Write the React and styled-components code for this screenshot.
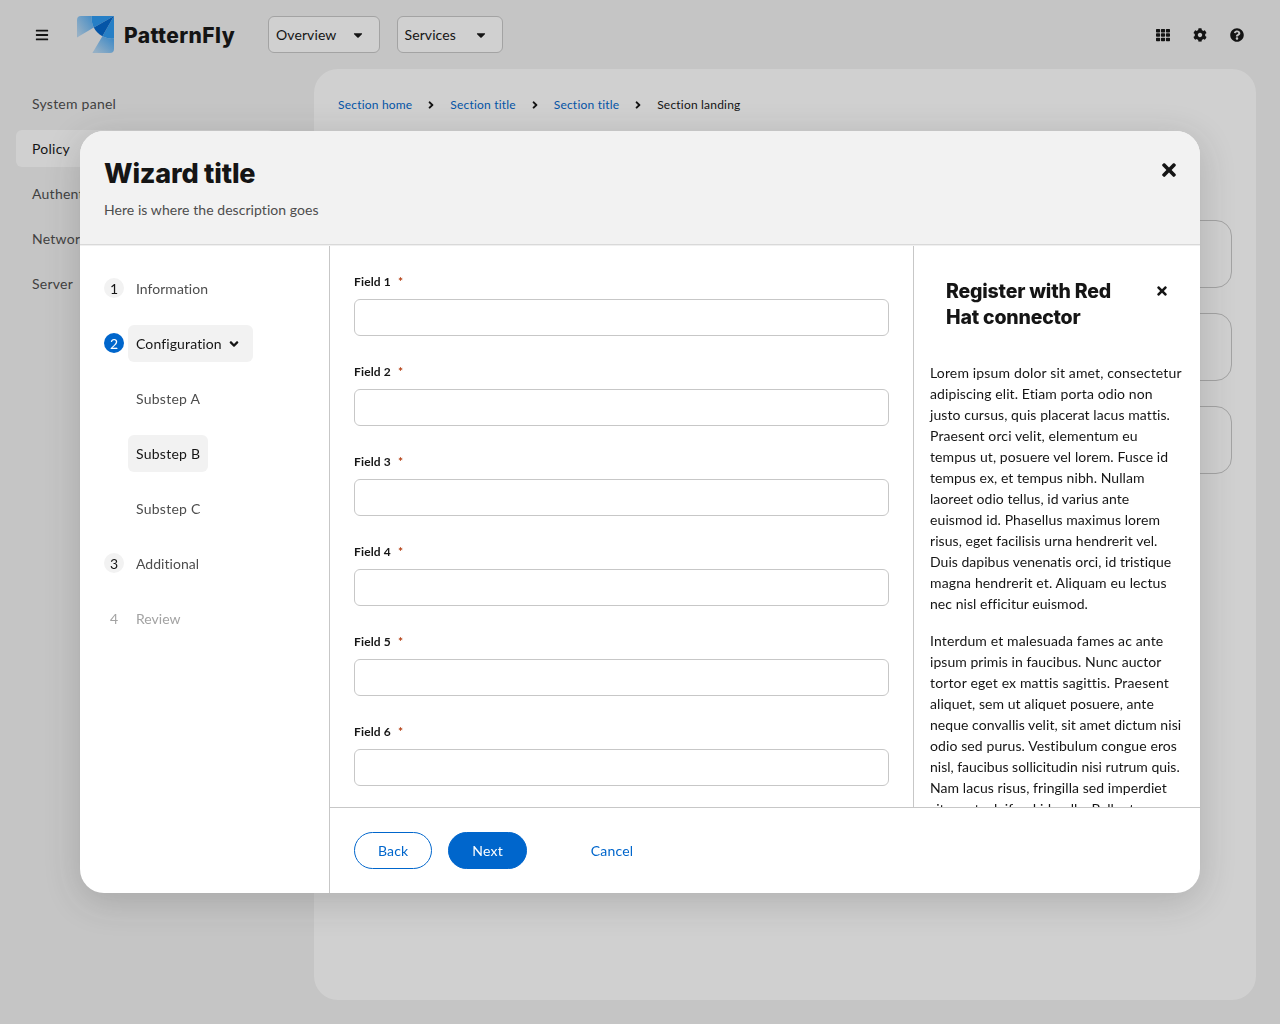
import React from "react";
import styled, { createGlobalStyle, css } from "styled-components";
import {
  FaBars,
  FaTh,
  FaCog,
  FaQuestionCircle,
  FaCaretDown,
  FaAngleRight,
  FaAngleDown,
  FaTimes,
} from "react-icons/fa";

const Global = createGlobalStyle`
  *, *::before, *::after { box-sizing: border-box; }
  body {
    margin: 0;
    background: #f2f2f2;
    color: #151515;
    font-family: Lato, "Open Sans", sans-serif;
    font-size: 14px;
    line-height: 21px;
    letter-spacing: 0.1px;
    overflow: hidden;
  }
  h1, h2, p, ul, ol { margin: 0; padding: 0; }
  ul, ol { list-style: none; }
  a { color: #0066cc; text-decoration: none; }
  button { font: inherit; letter-spacing: inherit; color: inherit; cursor: pointer; }
  svg { display: block; flex: none; }
`;

const displayFont = css`
  font-family: Inter, "Open Sans", sans-serif;
  font-weight: 800;
  white-space: nowrap;
`;

const Page = styled.div`
  display: grid;
  grid-template: 69px 1fr / 314px 1fr;
  height: 1024px;
`;

const Masthead = styled.header`
  grid-column: 1 / -1;
  display: flex;
  align-items: center;
  padding: 0 28px 0 23.5px;
`;

const IconButton = styled.button`
  display: flex;
  align-items: center;
  justify-content: center;
  width: 37px;
  height: 37px;
  padding: 0;
  border: 0;
  background: none;
  font-size: ${(p) => p.$size || 14}px;
`;

const Brand = styled.div`
  display: flex;
  align-items: center;
  gap: 10px;
  margin-left: 16.5px;
  width: 175px;
`;

const BrandName = styled.span`
  ${displayFont}
  padding-top: 1px;
  font-size: 21px;
  letter-spacing: 0.4px;
`;

const ToggleGroup = styled.div`
  display: flex;
  gap: 16.5px;
  margin-left: 16px;
`;

const Toggle = styled.button`
  display: flex;
  align-items: center;
  justify-content: space-between;
  width: ${(p) => p.$width}px;
  height: 37px;
  padding: 0 14.5px 0 7px;
  border: 1px solid #c7c7c7;
  border-radius: 6px;
  background: #fff;
`;

const Tools = styled.div`
  display: flex;
  margin-left: auto;
  margin-right: -3.4px;
`;

const Sidebar = styled.ul`
  display: flex;
  flex-direction: column;
  gap: 8px;
  padding: 16px 40px 0 16px;
`;

const SidebarItem = styled.li`
  height: 37px;
  padding: 8px 16px;
  border-radius: 6px;
  letter-spacing: 0.25px;
  color: ${(p) => (p.$current ? "#151515" : "#4d4d4d")};
  background: ${(p) => (p.$current ? "#fff" : "none")};
`;

const Main = styled.main`
  display: flex;
  flex-direction: column;
  margin: 0 24px 24px 0;
  padding: 26px 24px;
  border-radius: 24px;
  background: #fff;
`;

const Breadcrumb = styled.ol`
  display: flex;
  height: 20px;
  font-size: 12px;
  line-height: 20px;
  letter-spacing: 0.2px;
`;

const Crumb = styled.li`
  display: flex;
  align-items: center;
`;

const CrumbSeparator = styled.span`
  display: flex;
  margin: 0 12.9px 0 13px;
`;

const CardStack = styled.div`
  display: flex;
  flex-direction: column;
  gap: 25px;
  margin-top: 105px;
`;

const Card = styled.div`
  height: 68px;
  border: 1px solid #c7c7c7;
  border-radius: 16px;
`;

const Backdrop = styled.div`
  position: fixed;
  inset: 0;
  display: flex;
  align-items: center;
  justify-content: center;
  background: rgba(21, 21, 21, 0.2);
`;

const Modal = styled.section`
  display: flex;
  flex-direction: column;
  width: 1120px;
  height: 762px;
  border-radius: 24px;
  background: #fff;
  overflow: hidden;
  box-shadow: 0 8px 36px rgba(41, 41, 41, 0.2);
`;

const WizardHeader = styled.header`
  display: flex;
  justify-content: space-between;
  height: 115px;
  padding: 24px 12.5px 0 24px;
  border-bottom: 1px solid #f0f0f0;
  background: #f2f2f2;
  box-shadow: inset 0 -1px 0 #d9d9d9;
`;

const WizardTitle = styled.h1`
  ${displayFont}
  padding-top: 1px;
  font-size: 27px;
  line-height: 36px;
  letter-spacing: -0.2px;
`;

const WizardDescription = styled.p`
  margin-top: 7px;
  color: #4d4d4d;
  letter-spacing: 0.06px;
`;

const WizardCloseSlot = styled.div`
  margin-top: -4px;
`;

const WizardBody = styled.div`
  display: grid;
  grid-template: 1fr 86px / 250px 1fr;
  flex: 1;
  min-height: 0;
`;

const Steps = styled.ol`
  grid-row: 1 / -1;
  display: flex;
  flex-direction: column;
  gap: 18px;
  padding: 24.45px 24px 0;
  border-right: 1px solid #c7c7c7;
`;

const Step = styled.li`
  display: flex;
  align-items: flex-start;
  gap: 4px;
  height: 37px;
  padding-left: ${(p) => (p.$nested ? 24 : 0)}px;
  letter-spacing: ${(p) => (p.$nested ? 0.25 : p.$current ? 0.12 : 0.03)}px;
`;

const StepNumber = styled.span`
  width: 20px;
  height: 20px;
  margin-top: 8px;
  border-radius: 50%;
  line-height: 21.5px;
  text-align: center;
  letter-spacing: 0;
  background: #f2f2f2;
  ${(p) =>
    p.$current &&
    css`
      background: #0066cc;
      color: #fff;
    `}
  ${(p) =>
    p.$disabled &&
    css`
      background: none;
      color: #a3a3a3;
    `}
`;

const StepLink = styled.span`
  display: flex;
  align-items: center;
  gap: 5.5px;
  height: 37px;
  padding: 0 8px;
  border-radius: 6px;
  color: ${(p) => (p.$disabled ? "#a3a3a3" : p.$current ? "#151515" : "#4d4d4d")};
  background: ${(p) => (p.$current ? "#f2f2f2" : "none")};
`;

const ChevronSlot = styled.span`
  display: flex;
  padding-right: 3.5px;
  font-size: 14px;
`;

const Content = styled.div`
  display: grid;
  grid-template-columns: 1fr 287px;
  min-height: 0;
  overflow: hidden;
`;

const Form = styled.form`
  display: flex;
  flex-direction: column;
  gap: 24px;
  padding: 26px 24px 0;
`;

const Field = styled.label`
  display: flex;
  flex-direction: column;
  gap: 9px;
  height: 66px;
  flex: none;
`;

const FieldLabel = styled.span`
  display: flex;
  gap: 7px;
  height: 18px;
  font-size: 12px;
  line-height: 20px;
  font-weight: 700;
  letter-spacing: 0.15px;
`;

const Required = styled.span`
  color: #b1380b;
`;

const TextInput = styled.input`
  width: 100%;
  height: 37px;
  padding: 0 8px;
  border: 1px solid #c7c7c7;
  border-radius: 6px;
  background: #fff;
  font: inherit;
`;

const Drawer = styled.aside`
  padding: 15px 16px 0;
  border-left: 1px solid #c7c7c7;
`;

const DrawerHead = styled.div`
  display: flex;
  justify-content: space-between;
  align-items: flex-start;
  padding: 16px 4px 32px 16px;
`;

const DrawerTitle = styled.h2`
  ${displayFont}
  padding-top: 1px;
  font-size: 19.5px;
  line-height: 26px;
  letter-spacing: -0.2px;
`;

const DrawerCloseSlot = styled.div`
  margin-top: -5px;
`;

const Paragraph = styled.p`
  margin-bottom: 16px;
  white-space: nowrap;
`;

const Line = styled.span`
  display: block;
  letter-spacing: ${(p) => p.$tracking}px;
`;

const Footer = styled.footer`
  display: flex;
  align-items: flex-start;
  gap: 16px;
  padding: 24px;
  border-top: 1px solid #c7c7c7;
`;

const Action = styled.button`
  width: ${(p) => p.$width || 78.4}px;
  height: 37px;
  padding: 0;
  border: 1px solid ${(p) => (p.$kind === "link" ? "transparent" : "#0066cc")};
  border-radius: 19px;
  background: ${(p) => (p.$kind === "primary" ? "#0066cc" : "transparent")};
  color: ${(p) => (p.$kind === "primary" ? "#fff" : "#0066cc")};
  letter-spacing: 0.2px;
  margin-left: ${(p) => (p.$kind === "link" ? 24 : 0)}px;
`;

const navItems = ["System panel", "Policy", "Authentication", "Network services", "Server"];
const crumbs = ["Section home", "Section title", "Section title", "Section landing"];
const steps = [
  { n: 1, label: "Information" },
  { n: 2, label: "Configuration", current: true, expandable: true },
  { label: "Substep A" },
  { label: "Substep B", current: true },
  { label: "Substep C" },
  { n: 3, label: "Additional" },
  { n: 4, label: "Review", disabled: true },
];
const fields = [1, 2, 3, 4, 5, 6];
const paragraphs = [
  [
    ["Lorem ipsum dolor sit amet, consectetur", 0.15],
    ["adipiscing elit. Etiam porta odio non", 0.1],
    ["justo cursus, quis placerat lacus mattis.", 0.08],
    ["Praesent orci velit, elementum eu", 0.11],
    ["tempus ut, posuere vel lorem. Fusce id", 0.1],
    ["tempus ex, et tempus nibh. Nullam", 0.06],
    ["laoreet odio tellus, id varius ante", 0.03],
    ["euismod id. Phasellus maximus lorem", 0.09],
    ["risus, eget facilisis urna hendrerit vel.", 0.05],
    ["Duis dapibus venenatis orci, id tristique", 0.03],
    ["magna hendrerit et. Aliquam eu lectus", 0.13],
    ["nec nisl efficitur euismod.", 0.05],
  ],
  [
    ["Interdum et malesuada fames ac ante", 0.14],
    ["ipsum primis in faucibus. Nunc auctor", 0.04],
    ["tortor eget ex mattis sagittis. Praesent", 0.15],
    ["aliquet, sem ut aliquet posuere, ante", 0.06],
    ["neque convallis velit, sit amet dictum nisi", 0.05],
    ["odio sed purus. Vestibulum congue eros", 0.1],
    ["nisl, faucibus sollicitudin nisi rutrum quis.", -0.01],
    ["Nam lacus risus, fringilla sed imperdiet", 0.06],
    ["sit amet, eleifend id nulla. Pellentesque", 0.08],
  ],
];

function Logo() {
  return (
    <svg width="37" height="37" viewBox="0 0 37 37" aria-hidden="true">
      <defs>
        <linearGradient id="wingTop" x1="0" y1="16" x2="20" y2="3" gradientUnits="userSpaceOnUse">
          <stop offset="0" stopColor="#2b9af3" stopOpacity="0.3" />
          <stop offset="1" stopColor="#2b9af3" stopOpacity="0.85" />
        </linearGradient>
        <linearGradient id="wingSide" x1="20" y1="37" x2="34" y2="20" gradientUnits="userSpaceOnUse">
          <stop offset="0" stopColor="#2b9af3" stopOpacity="0.3" />
          <stop offset="1" stopColor="#2b9af3" stopOpacity="0.85" />
        </linearGradient>
      </defs>
      <path fill="url(#wingTop)" d="M14.8 0H4Q0 0 0 4V21.4L16.8 11.6Q14 6 14.8 0Z" />
      <path fill="url(#wingSide)" d="M37 22.5V33Q37 37 33 37H15.4L25.4 20.2Q31 23.2 37 22.5Z" />
      <path fill="#2b9af3" d="M37 0H14.8Q14 6 16.8 11.6Z" />
      <path fill="#2b9af3" d="M37 0V22.5Q31 23.2 25.4 20.2Z" />
      <path fill="#0066cc" d="M37 0L16.8 11.6Q19.5 17.2 25.4 20.2Z" />
    </svg>
  );
}

export default function App() {
  return (
    <>
      <Global />
      <Page>
        <Masthead>
          <IconButton aria-label="Menu">
            <FaBars />
          </IconButton>
          <Brand>
            <Logo />
            <BrandName>PatternFly</BrandName>
          </Brand>
          <ToggleGroup>
            <Toggle $width={112}>
              Overview <FaCaretDown />
            </Toggle>
            <Toggle $width={106.5}>
              Services <FaCaretDown />
            </Toggle>
          </ToggleGroup>
          <Tools>
            <IconButton aria-label="Applications">
              <FaTh />
            </IconButton>
            <IconButton aria-label="Settings">
              <FaCog />
            </IconButton>
            <IconButton aria-label="Help">
              <FaQuestionCircle />
            </IconButton>
          </Tools>
        </Masthead>
        <Sidebar>
          {navItems.map((label) => (
            <SidebarItem key={label} $current={label === "Policy"}>
              {label}
            </SidebarItem>
          ))}
        </Sidebar>
        <Main>
          <Breadcrumb>
            {crumbs.map((label, i) => (
              <Crumb key={i}>
                {i > 0 && (
                  <CrumbSeparator>
                    <FaAngleRight />
                  </CrumbSeparator>
                )}
                {i < crumbs.length - 1 ? <a href="#section">{label}</a> : label}
              </Crumb>
            ))}
          </Breadcrumb>
          <CardStack>
            <Card />
            <Card />
            <Card />
          </CardStack>
        </Main>
      </Page>
      <Backdrop>
        <Modal role="dialog">
          <WizardHeader>
            <div>
              <WizardTitle>Wizard title</WizardTitle>
              <WizardDescription>Here is where the description goes</WizardDescription>
            </div>
            <WizardCloseSlot>
              <IconButton $size={20} aria-label="Close wizard">
                <FaTimes />
              </IconButton>
            </WizardCloseSlot>
          </WizardHeader>
          <WizardBody>
            <Steps>
              {steps.map((s) => (
                <Step key={s.label} $nested={!s.n} $current={s.current}>
                  {s.n && (
                    <StepNumber $current={s.current} $disabled={s.disabled}>
                      {s.n}
                    </StepNumber>
                  )}
                  <StepLink $current={s.current} $disabled={s.disabled}>
                    {s.label}
                    {s.expandable && (
                      <ChevronSlot>
                        <FaAngleDown />
                      </ChevronSlot>
                    )}
                  </StepLink>
                </Step>
              ))}
            </Steps>
            <Content>
              <Form>
                {fields.map((n) => (
                  <Field key={n}>
                    <FieldLabel>
                      Field {n} <Required>*</Required>
                    </FieldLabel>
                    <TextInput />
                  </Field>
                ))}
              </Form>
              <Drawer>
                <DrawerHead>
                  <DrawerTitle>
                    Register with Red
                    <br />
                    Hat connector
                  </DrawerTitle>
                  <DrawerCloseSlot>
                    <IconButton aria-label="Close panel">
                      <FaTimes />
                    </IconButton>
                  </DrawerCloseSlot>
                </DrawerHead>
                {paragraphs.map((lines, i) => (
                  <Paragraph key={i}>
                    {lines.map(([text, tracking]) => (
                      <Line key={text} $tracking={tracking}>
                        {text}
                      </Line>
                    ))}
                  </Paragraph>
                ))}
              </Drawer>
            </Content>
            <Footer>
              <Action $kind="secondary">Back</Action>
              <Action $kind="primary">Next</Action>
              <Action $kind="link" $width={90.5}>
                Cancel
              </Action>
            </Footer>
          </WizardBody>
        </Modal>
      </Backdrop>
    </>
  );
}
